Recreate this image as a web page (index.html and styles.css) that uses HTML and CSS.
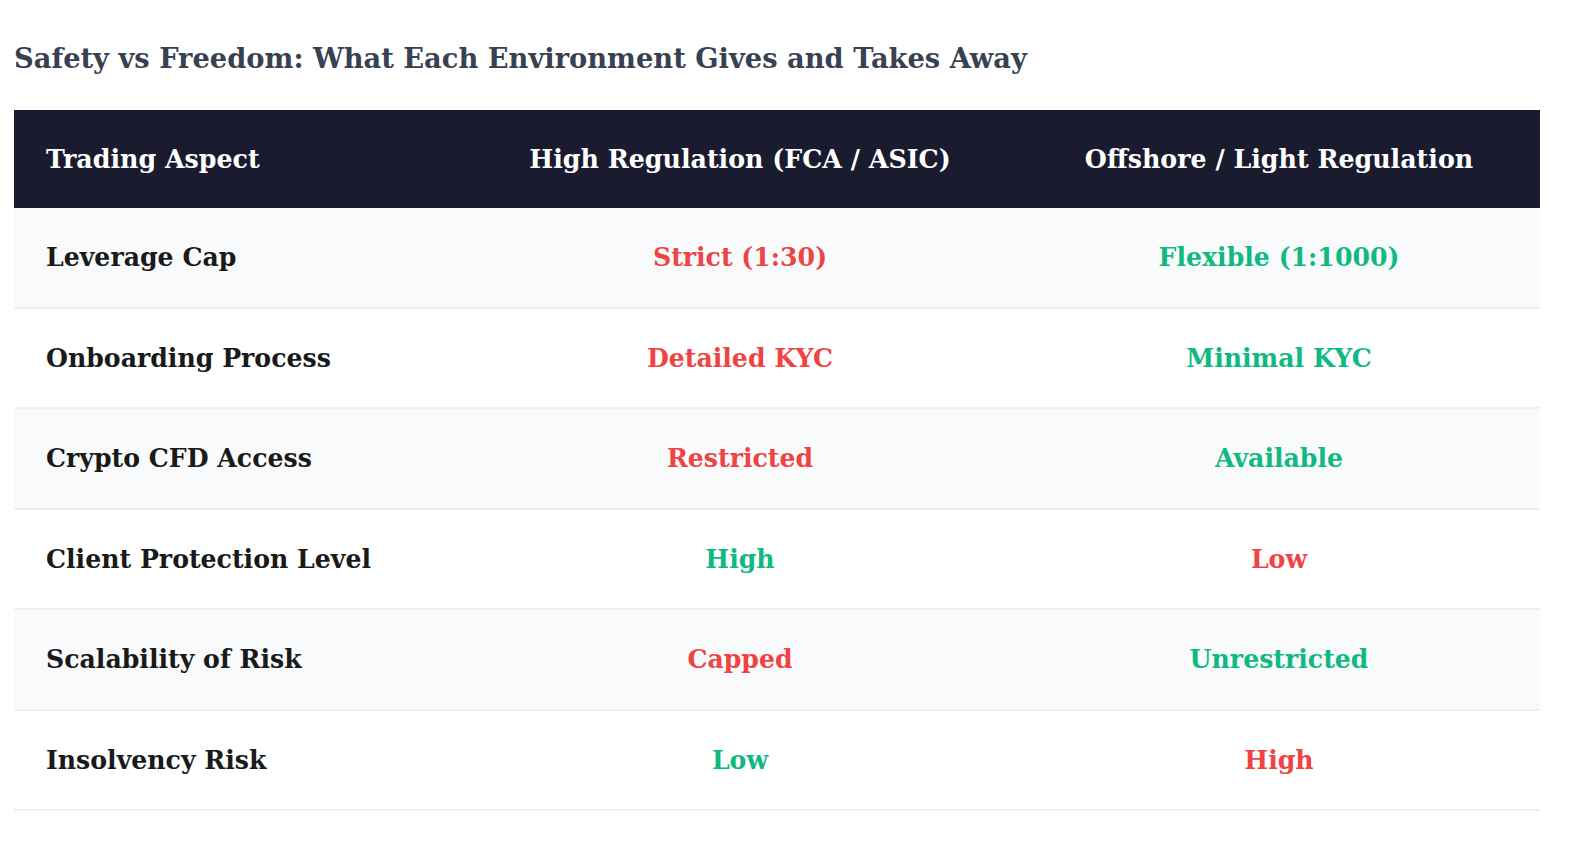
FILE: index.html
```html
<!DOCTYPE html>
<html lang="en">
<head>
<meta charset="utf-8">
<title>Safety vs Freedom</title>
<link rel="stylesheet" href="styles.css">
</head>
<body>
<div class="wrap">
  <h2 class="title">Safety vs Freedom: What Each Environment Gives and Takes Away</h2>
  <table class="cmp">
    <colgroup>
      <col class="c1"><col class="c2"><col class="c3">
    </colgroup>
    <thead>
      <tr><th class="left">Trading Aspect</th><th>High Regulation (FCA / ASIC)</th><th>Offshore / Light Regulation</th></tr>
    </thead>
    <tbody>
      <tr><td class="left">Leverage Cap</td><td class="bad">Strict (1:30)</td><td class="good">Flexible (1:1000)</td></tr>
      <tr><td class="left">Onboarding Process</td><td class="bad">Detailed KYC</td><td class="good">Minimal KYC</td></tr>
      <tr><td class="left">Crypto CFD Access</td><td class="bad">Restricted</td><td class="good">Available</td></tr>
      <tr><td class="left">Client Protection Level</td><td class="good">High</td><td class="bad">Low</td></tr>
      <tr><td class="left">Scalability of Risk</td><td class="bad">Capped</td><td class="good">Unrestricted</td></tr>
      <tr><td class="left">Insolvency Risk</td><td class="good">Low</td><td class="bad">High</td></tr>
    </tbody>
  </table>
</div>
</body>
</html>
```
FILE: styles.css
```css
html, body { margin: 0; padding: 0; background: #ffffff; }
body { font-family: "DejaVu Serif", "Liberation Serif", serif; }
.wrap { width: 1526px; margin-left: 14px; padding-top: 38px; }
.title { margin: 0 0 32px 0; font-size: 27.3px; font-weight: 700; color: #374151; line-height: 40px; }
.cmp { width: 1526px; border-collapse: collapse; table-layout: fixed; }
.c1 { width: 448px; } .c2 { width: 556px; } .c3 { width: 522px; }
.cmp th { background: #1b1b2f; color: #ffffff; font-weight: 700; font-size: 25.3px; height: 98px; text-align: center; padding: 0 32px; }
.cmp td { font-size: 25.2px; font-weight: 700; text-align: center; height: 98.5px; padding: 0 32px; border-bottom: 2px solid #eeeff1; color: #1a1a1a; }
.cmp .left { text-align: left; }
.cmp tbody tr:nth-child(odd) td { background: #f9fafb; }
.cmp td.bad { color: #ef4444; }
.cmp td.good { color: #10b981; }
```
